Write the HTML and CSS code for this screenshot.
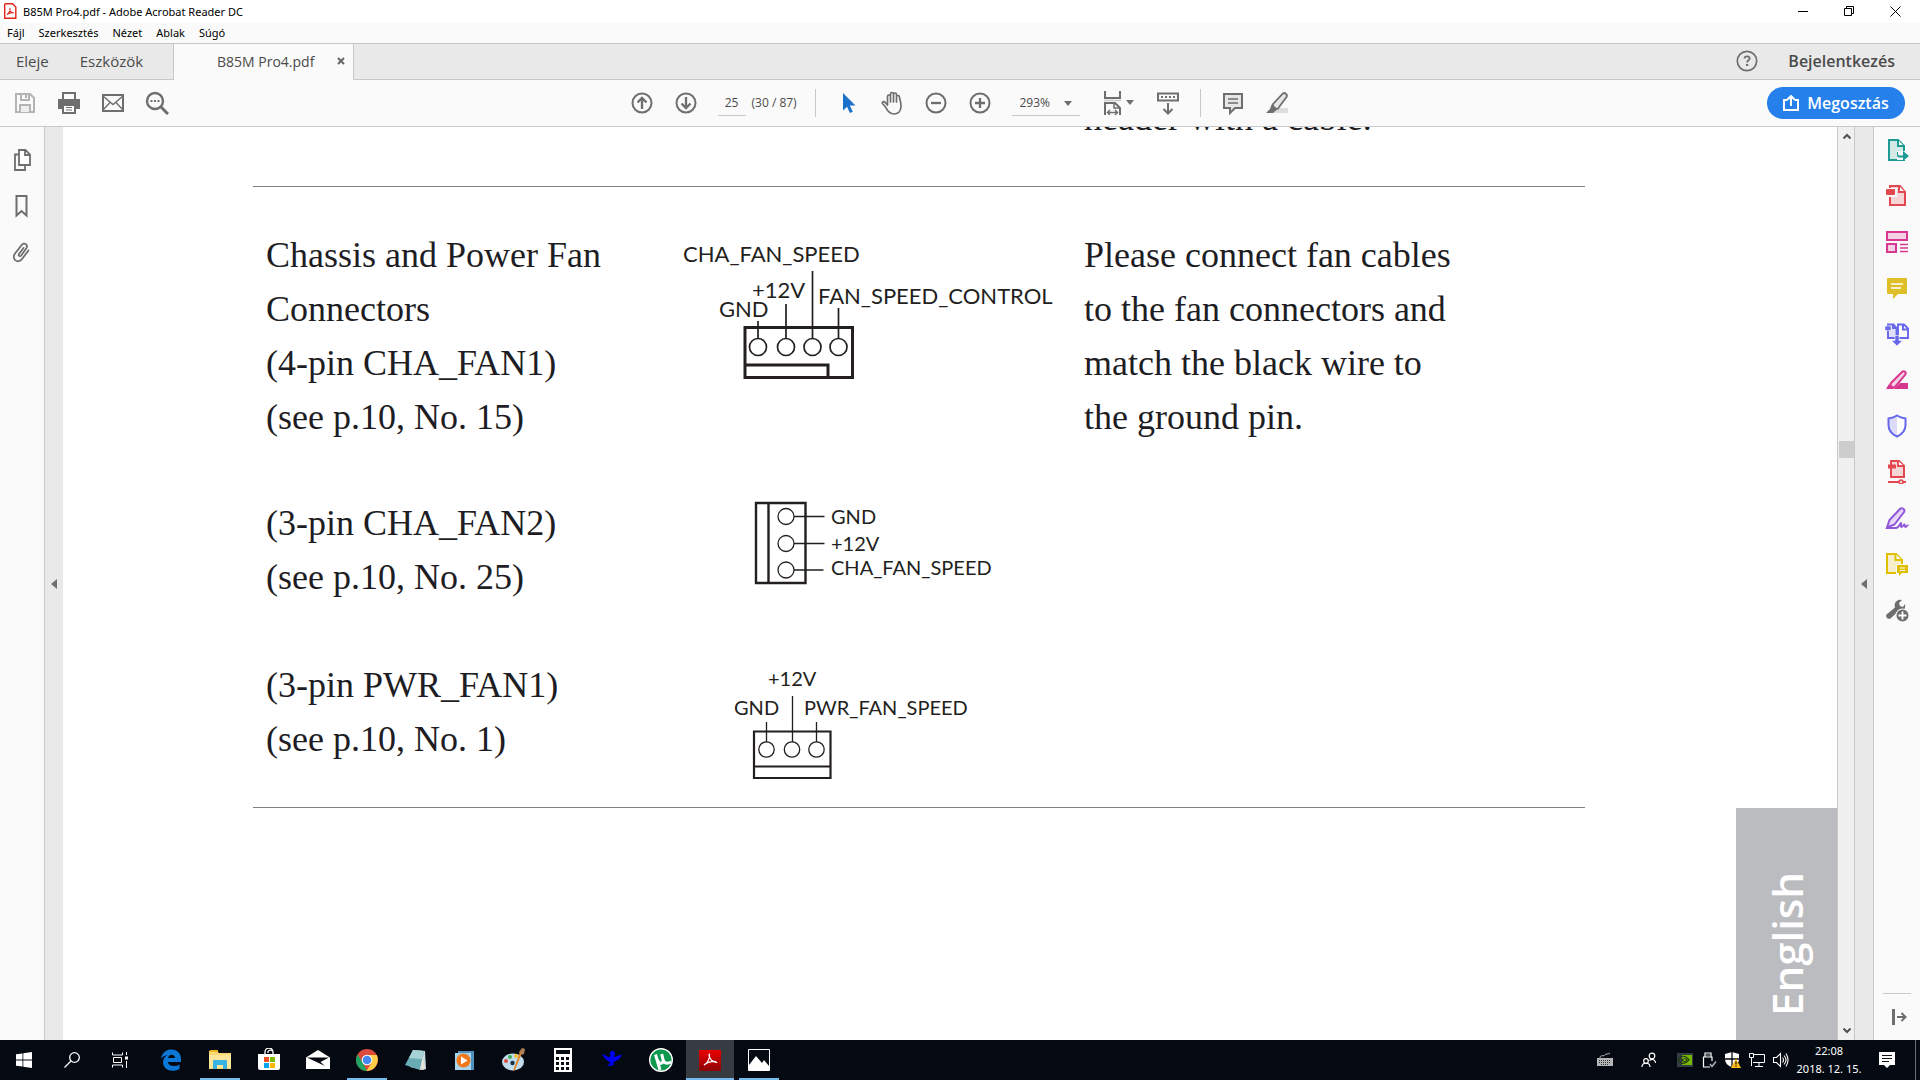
FILE: index.html
```html
<!DOCTYPE html>
<html lang="hu">
<head>
<meta charset="utf-8">
<title>B85M Pro4.pdf - Adobe Acrobat Reader DC</title>
<link rel="stylesheet" href="styles.css">
</head>
<body>
<header class="titlebar">
  <svg class="app-icon" width="13" height="16" viewBox="0 0 13 16"><path d="M1.500.7h7l3.300 3.300v11.300H.7V1.500z" fill="#fff" stroke="#e2231a" stroke-width="1.400"/><path d="M3 11.500C5 10.500 6.500 7.500 6 5c-.8 3 1.500 5 4 5-2.500-.8-5 0-7 1.500z" fill="none" stroke="#e2231a" stroke-width="1.100"/></svg>
  <h1 class="title">B85M Pro4.pdf - Adobe Acrobat Reader DC</h1>
  <div class="window-controls">
    <button class="win-btn" aria-label="Kis méret"><svg width="11" height="11"><path d="M0 5.500h10" stroke="#000"/></svg></button>
    <button class="win-btn" aria-label="Előző méret"><svg width="11" height="11" fill="none" stroke="#000"><path d="M.5 2.500h7v7h-7zM2.500 2.500v-2h7v7h-2"/></svg></button>
    <button class="win-btn" aria-label="Bezárás"><svg width="11" height="11"><path d="M.5.5l10 10M10.500.5l-10 10" stroke="#000"/></svg></button>
  </div>
</header>
<nav class="menubar">
  <button>Fájl</button><button>Szerkesztés</button><button>Nézet</button><button>Ablak</button><button>Súgó</button>
</nav>
<div class="tabstrip">
  <div class="home-tabs"><button>Eleje</button><button>Eszközök</button></div>
  <div class="doc-tab"><button class="doc-name">B85M Pro4.pdf</button><button class="doc-close" aria-label="Lap bezárása"><svg width="8" height="8"><path d="M1 1l6 6M7 1L1 7" stroke="#666" stroke-width="2"/></svg></button></div>
  <div class="account">
    <button aria-label="Súgó"><svg width="22" height="22" viewBox="0 0 22 22"><circle cx="11" cy="11" r="9.700" fill="none" stroke="#6e6e6e" stroke-width="1.700"/><path d="M8.500 8.600c0-1.500 1.200-2.300 2.600-2.300s2.500.8 2.500 2.100c0 1.800-2.500 2-2.500 4" fill="none" stroke="#6e6e6e" stroke-width="1.800"/><path d="M10 14h2.200v2H10z" fill="#6e6e6e"/></svg></button>
    <button class="signin">Bejelentkezés</button>
  </div>
</div>
<div class="toolbar">
  <div class="file-tools">
    <button aria-label="Mentés"><svg width="24" height="24" viewBox="0 0 24 24" fill="none" stroke="#b4b4b4" stroke-width="2"><path d="M3 3h14l4 4v14H3z"/><path d="M8 3v6h8V3M13 4v3"/><path d="M7 21v-7h10v7" fill="#eee"/></svg></button>
    <button aria-label="Nyomtatás"><svg width="24" height="24" viewBox="0 0 24 24"><path d="M6 8V2h12v6" fill="none" stroke="#6e6e6e" stroke-width="2"/><path d="M1 8h22v10h-4v-4H5v4H1z" fill="#6e6e6e"/><path d="M6 14h12v8H6z" fill="#fff" stroke="#6e6e6e" stroke-width="2"/><path d="M9 16.500h6M9 19h6" stroke="#6e6e6e"/></svg></button>
    <button aria-label="E-mail"><svg width="24" height="24" viewBox="0 0 24 24" fill="none" stroke="#6e6e6e"><path d="M2 4h20v16H2z" stroke-width="2"/><path d="M2 5l10 8.500L22 5M2 19l7-7.500M22 19l-7-7.500" stroke-width="1.400"/></svg></button>
    <button aria-label="Keresés"><svg width="24" height="24" viewBox="0 0 24 24"><circle cx="10" cy="10" r="8" fill="none" stroke="#6e6e6e" stroke-width="2.400"/><path d="M15.500 15.500L23 23" stroke="#6e6e6e" stroke-width="3"/><path d="M5.500 9h2v2h-2zM9 9h2v2H9zM12.500 9h2v2h-2z" fill="#6e6e6e"/></svg></button>
  </div>
  <div class="view-tools">
    <button aria-label="Előző oldal"><svg width="24" height="24" viewBox="0 0 24 24" fill="none" stroke="#6e6e6e" stroke-width="2"><circle cx="12" cy="12" r="9.500"/><path d="M12 18V7.500M7.500 11.500L12 7l4.500 4.500" stroke-width="2.300"/></svg></button>
    <button aria-label="Következő oldal"><svg width="24" height="24" viewBox="0 0 24 24" fill="none" stroke="#6e6e6e" stroke-width="2"><circle cx="12" cy="12" r="9.500"/><path d="M12 6v10.500M7.500 12.500L12 17l4.500-4.500" stroke-width="2.300"/></svg></button>
    <div class="page-nav"><input class="page-input" type="text" value="25" aria-label="Oldalszám"><span>(30 / 87)</span></div>
    <i class="sep"></i>
    <button aria-label="Kijelölés"><svg width="24" height="24" viewBox="0 0 24 24"><path d="M7 2v17.500l4-3.800 3 6.300 2.800-1.300-3-6.200h5.700z" fill="#1b71c9"/></svg></button>
    <button aria-label="Kéz"><svg width="24" height="24" viewBox="0 0 24 24" fill="none" stroke="#6e6e6e" stroke-width="1.700" stroke-linecap="round" stroke-linejoin="round"><path d="M7.500 14V5.500a1.500 1.500 0 0 1 3 0V11M10.500 11V3a1.500 1.500 0 0 1 3 0v8M13.500 11V3.500a1.500 1.500 0 0 1 3 0V11M16.500 11V6a1.500 1.500 0 0 1 3 0c0 3 2 6 1.500 10-.4 3.500-2.500 7-7 7-5.500 0-7-4-8.500-7L2.500 12.500c-.8-1.500 1.300-2.500 2.500-1.300L7.500 14"/></svg></button>
    <button aria-label="Kicsinyítés"><svg width="24" height="24" viewBox="0 0 24 24" fill="none" stroke="#6e6e6e" stroke-width="2"><circle cx="12" cy="12" r="9.500"/><path d="M7 12h10" stroke-width="2.300"/></svg></button>
    <button aria-label="Nagyítás"><svg width="24" height="24" viewBox="0 0 24 24" fill="none" stroke="#6e6e6e" stroke-width="2"><circle cx="12" cy="12" r="9.500"/><path d="M7 12h10M12 7v10" stroke-width="2.300"/></svg></button>
    <div class="zoom"><select class="zoom-select" aria-label="Nagyítás mértéke"><option>293%</option></select><svg class="zoom-caret" width="8" height="5"><path d="M0 0h8L4 5z" fill="#6e6e6e"/></svg></div>
    <button class="fit" aria-label="Oldalkijelzés"><svg width="24" height="24" viewBox="0 0 24 24" fill="none" stroke="#6e6e6e" stroke-width="2"><path d="M4 0v7h15V0"/><path d="M3 9.500h17" stroke="#ccc" stroke-width="1.500"/><path d="M4 24V12h10l5 5v7"/><path d="M13 12v5h6M6.500 21.500h10M9 19l-2.500 2.500L9 24M14 19l2.500 2.500L14 24" stroke-width="1.500"/></svg><svg width="8" height="5"><path d="M0 0h8L4 5z" fill="#6e6e6e"/></svg></button>
    <button aria-label="Görgetés"><svg width="24" height="24" viewBox="0 0 24 24" fill="none" stroke="#6e6e6e" stroke-width="2"><path d="M2 2.500h20v7H2z"/><path d="M5 6h14" stroke-dasharray="2 2"/><path d="M12 12v10M7.500 18l4.500 4.500 4.500-4.500"/></svg></button>
    <i class="sep"></i>
    <button aria-label="Megjegyzés"><svg width="24" height="24" viewBox="0 0 24 24"><path d="M3 3h18v14h-7l-5 5v-5H3z" fill="#e6e6e6" stroke="#6e6e6e" stroke-width="2"/><path d="M7 8h10M7 12h10" stroke="#6e6e6e" stroke-width="1.600"/></svg></button>
    <button aria-label="Kiemelés"><svg width="24" height="24" viewBox="0 0 24 24"><path d="M12 17h11v5H7z" fill="#ddd"/><path d="M8 13L18 2.500c1.500-1.500 5 1 3.500 3.500L13 17.500c-1.500 1.500-6-2-5-4.500z" fill="#e6e6e6" stroke="#6e6e6e" stroke-width="1.800"/><path d="M6.500 13.500l5.500 5L8 22H1l4-4z" fill="#6e6e6e"/></svg></button>
  </div>
  <button class="share"><svg width="16" height="16" viewBox="0 0 16 16" fill="none" stroke="#fff" stroke-width="2"><path d="M4.500 5H1v10h14V5h-3.500M8 11V2M4.500 4.500L8 1l3.500 3.500"/></svg>Megosztás</button>
</div>
<main class="workspace">
  <aside class="left-pane">
    <button aria-label="Oldalminiatűrök"><svg width="20" height="24" viewBox="0 0 20 24" fill="none" stroke="#6e6e6e" stroke-width="1.800"><path d="M7 6.500H3V22h10v-4"/><path d="M7 2h6.500L18 6.500V17H7z" fill="#fff"/><path d="M13 2v5h5"/></svg></button>
    <button aria-label="Könyvjelzők"><svg width="20" height="24" viewBox="0 0 20 24" fill="none" stroke="#6e6e6e" stroke-width="2"><path d="M4.500 2h10v19.500l-5-4.500-5 4.500z"/></svg></button>
    <button aria-label="Mellékletek"><svg width="20" height="24" viewBox="0 0 20 24" fill="none" stroke="#6e6e6e" stroke-width="1.800" stroke-linecap="round"><path d="M11.500 8L7 14c-1 1.500 1 3 2.200 1.500l5-7C16.500 5 12.500 1.500 9.700 5L3 13.500c-4 5.500 3 11 7 5.500l6.500-8.500"/></svg></button>
  </aside>
  <button class="gutter gutter-left" aria-label="Bal oldali ablaktábla"><svg width="7" height="12"><path d="M6 1v10L0 6z" fill="#6e6e6e"/></svg></button>
  <section class="viewport">
    <div class="page">
      <table class="manual">
        <colgroup><col class="col-name"><col class="col-diagram"><col class="col-note"></colgroup>
        <tbody>
        <tr class="previous"><td></td><td></td><td>header with a cable.</td></tr>
        <tr class="first">
          <td>Chassis and Power Fan<br>Connectors<br>(4-pin CHA_FAN1)<br>(see p.10, No. 15)</td>
          <td class="diagram"><svg class="label-large" width="400" height="160" fill="none" stroke="#231f20">
            <g><text x="13" y="34">CHA_FAN_SPEED</text><text x="82" y="70">+12V</text><text x="49" y="89">GND</text><text x="148" y="76">FAN_SPEED_CONTROL</text></g>
            <path d="M75 99.500h107.500v50H75zM75 137h83v12" stroke-width="3"/>
            <path d="M88 93v17M116 76v34M142.500 43v67M168.500 80v30" stroke-width="1.700"/>
            <g stroke-width="1.700"><circle cx="88" cy="119" r="8.500"/><circle cx="116" cy="119" r="8.500"/><circle cx="142.500" cy="119" r="8.500"/><circle cx="168.500" cy="119" r="8.500"/></g></svg></td>
          <td rowspan="3">Please connect fan cables<br>to the fan connectors and<br>match the black wire to<br>the ground pin.</td>
        </tr>
        <tr>
          <td>(3-pin CHA_FAN2)<br>(see p.10, No. 25)</td>
          <td class="diagram"><svg width="400" height="108" fill="none" stroke="#231f20">
            <g><text x="161" y="28">GND</text><text x="161" y="55">+12V</text><text x="161" y="79">CHA_FAN_SPEED</text></g>
            <path d="M86 7h49.500v80H86zM98.500 7v80" stroke-width="2.400"/>
            <path d="M124 20.500h30.500M124 47.500h30.500M124 74h29.500" stroke-width="1.300"/>
            <g stroke-width="1.300"><circle cx="116" cy="20.500" r="8"/><circle cx="116" cy="47.500" r="8"/><circle cx="116" cy="74" r="8"/></g></svg></td>
        </tr>
        <tr class="last">
          <td>(3-pin PWR_FAN1)<br>(see p.10, No. 1)</td>
          <td class="diagram"><svg width="400" height="130" fill="none" stroke="#231f20">
            <g><text x="98" y="30">+12V</text><text x="64" y="59">GND</text><text x="134" y="59">PWR_FAN_SPEED</text></g>
            <path d="M84 75.500h76.500v46.500H84zM84 110.500h76.500" stroke-width="2.200"/>
            <path d="M96.500 66v20M122.500 40v46M146.500 66v20" stroke-width="1.300"/>
            <g stroke-width="1.300"><circle cx="96.500" cy="93.500" r="7.700"/><circle cx="122" cy="93.500" r="7.700"/><circle cx="146.500" cy="93.500" r="7.700"/></g></svg></td>
        </tr>
        </tbody>
      </table>
      <div class="language"><span>English</span></div>
    </div>
  </section>
  <div class="scrollbar">
    <button aria-label="Fel"><svg width="8" height="6"><path d="M.5 5.500L4 2l3.500 3.500" fill="none" stroke="#505050" stroke-width="2"/></svg></button>
    <i class="thumb"></i>
    <button class="down" aria-label="Le"><svg width="8" height="6"><path d="M.5.5L4 4 7.500.5" fill="none" stroke="#505050" stroke-width="2"/></svg></button>
  </div>
  <button class="gutter gutter-right" aria-label="Jobb oldali ablaktábla"><svg width="7" height="12"><path d="M6 1v10L0 6z" fill="#6e6e6e"/></svg></button>
  <aside class="right-pane">
    <button aria-label="PDF exportálása"><svg width="24" height="24" viewBox="0 0 24 24"><path d="M4 2h9l6 6v14H4z" fill="#d3e9e6" stroke="#1c9a94" stroke-width="2"/><path d="M13 2v6h6" fill="#fff" stroke="#1c9a94" stroke-width="2"/><path d="M12 13h12v9H12z" fill="#fafafa"/><path d="M13 14v2.500q0 1 2 1h3V13l6 5-6 5v-3.500h-4q-2 0-2-3V14z" fill="#1c9a94"/></svg></button>
    <button aria-label="PDF létrehozása"><svg width="24" height="24" viewBox="0 0 24 24"><path d="M5 2h10l5 6v13H5z" fill="#f5d5d6" stroke="#e34850" stroke-width="2"/><path d="M14 2v6h6" fill="#fff" stroke="#e34850" stroke-width="2"/><rect x="0" y="4" width="12" height="9" rx="1" fill="#fafafa"/><rect x="1" y="5" width="9" height="6" rx="1" fill="#e34850"/></svg></button>
    <button aria-label="Rendezés"><svg width="24" height="24" viewBox="0 0 24 24"><path d="M2 2h20v8H2zM2 14h9v8H2z" fill="#f5d0e5" stroke="#d83790" stroke-width="2"/><path d="M15 14.500h8M15 18h8M15 21.500h8" stroke="#d83790" stroke-width="1.300"/></svg></button>
    <button aria-label="Megjegyzés"><svg width="24" height="24" viewBox="0 0 24 24"><path d="M3 2h18a1 1 0 0 1 1 1v14a1 1 0 0 1-1 1h-8l-5 5v-5H3a1 1 0 0 1-1-1V3a1 1 0 0 1 1-1z" fill="#dfbf27"/><path d="M6 8h12M6 12h10" stroke="#fff" stroke-width="1.700"/></svg></button>
    <button aria-label="Fájlok egyesítése"><svg width="24" height="24" viewBox="0 0 24 24" fill="none" stroke="#6767ec" stroke-width="1.900"><path d="M3 2.500h5.500l3 3.500v10H3z" fill="#e0e0fb"/><path d="M8 2.500V6h3M13 2.500h6l4 4V16H13zM18 2.500v5h5"/><path d="M0 4h6v4.500H0zM10 13.500h4v5h3.500L12 24l-5.500-5.500H10z" fill="#6767ec" stroke="#fafafa" stroke-width=".6"/></svg></button>
    <button aria-label="Kitakarás"><svg width="24" height="24" viewBox="0 0 24 24"><path d="M15 15h8v6H9z" fill="#d83790"/><path d="M6 15L17 4c2-2 5 .5 3 3L10 19c-2 2-6-2-4-4z" fill="#f5d0e5" stroke="#d83790" stroke-width="2"/><path d="M4 16l5 5H1z" fill="#d83790"/></svg></button>
    <button aria-label="Védelem"><svg width="24" height="24" viewBox="0 0 24 24"><path d="M12 1.500c3 2 5.500 2.500 8.500 3V11c0 6-4 9.500-8.500 11.500C7.500 20.500 3.500 17 3.500 11V4.500c3-.5 5.500-1 8.500-3z" fill="#fff"/><path d="M12 1.500v21C7.500 20.500 3.500 17 3.500 11V4.500c3-.5 5.500-1 8.500-3z" fill="#dcdcfa"/><path d="M12 1.500c3 2 5.500 2.500 8.500 3V11c0 6-4 9.500-8.500 11.500C7.500 20.500 3.500 17 3.500 11V4.500c3-.5 5.500-1 8.500-3z" fill="none" stroke="#6767ec" stroke-width="2"/></svg></button>
    <button aria-label="PDF optimalizálása"><svg width="24" height="24" viewBox="0 0 24 24"><path d="M6 1h8l5 5v11H6z" fill="#f5d5d6" stroke="#e34850" stroke-width="2"/><path d="M13 1v5h6" fill="#fff" stroke="#e34850" stroke-width="1.800"/><path d="M3 4.500h8v4H3z" fill="#e34850"/><path d="M3 22h18" stroke="#e34850" stroke-width="2"/><circle cx="16" cy="22" r="2" fill="#f5d5d6" stroke="#e34850" stroke-width="1.500"/></svg></button>
    <button aria-label="Kitöltés és aláírás"><svg width="24" height="24" viewBox="0 0 24 24"><path d="M2 21.500L4.500 14 15 3c2-2 5.500.5 4 3L9.500 18.500z" fill="#e5d7f5" stroke="#9256d9" stroke-width="2"/><path d="M1 22h10c3 0 4-5 5-5s-1 4 .5 4 2-2.500 3-2.500-.5 2.500 1 2.500 1-1.500 3-2" fill="none" stroke="#9256d9" stroke-width="1.800"/></svg></button>
    <button aria-label="Küldés megjegyzésre"><svg width="24" height="24" viewBox="0 0 24 24"><path d="M2 2h9l6 6v13H2z" fill="#f6eecb" stroke="#dfbf00" stroke-width="2"/><path d="M10.500 2v6H17" fill="#fff" stroke="#dfbf00" stroke-width="2"/><path d="M11 12h13v10H11z" fill="#fafafa"/><path d="M12 13h11v8h-6l-3 3v-3h-2z" fill="#dfbf00"/><path d="M15 16h5M15 18.500h5" stroke="#fff"/></svg></button>
    <button aria-label="További eszközök"><svg width="24" height="24" viewBox="0 0 24 24"><path d="M1.500 16.500L10 9.500C8.500 5 12 .5 17 2l-3 3 1 3 3 1 2-3c1 5-2 8-6.500 7l-8 7.500c-2.500 1.500-5.500-2-4-4z" fill="#6e6e6e"/><circle cx="17.500" cy="17.500" r="7" fill="#fafafa"/><circle cx="17.500" cy="17.500" r="6" fill="#6e6e6e"/><path d="M13.500 17.500h8M17.500 13.500v8" stroke="#fff" stroke-width="1.800"/></svg></button>
    <div class="pane-foot"><button aria-label="Ablaktábla bezárása"><svg width="15" height="16"><path d="M1.500 0v16" stroke="#6e6e6e" stroke-width="3"/><path d="M5 8h8M9.500 4l4 4-4 4" fill="none" stroke="#6e6e6e" stroke-width="2"/></svg></button></div>
  </aside>
</main>
<footer class="taskbar">
  <div class="system">
    <button aria-label="Start"><svg width="16" height="16" fill="#fff"><path d="M0 2.300L6.500 1.400v6.200H0zM7.300 1.300L16 0v7.600H7.300zM0 8.400h6.500v6.200L0 13.700zM7.300 8.400H16V16l-8.700-1.300z"/></svg></button>
    <button aria-label="Keresés"><svg width="16" height="16" fill="none" stroke="#fff" stroke-width="1.300"><circle cx="10.500" cy="5.500" r="4.800"/><path d="M7 9L.5 15.500"/></svg></button>
    <button aria-label="Feladatnézet"><svg width="16" height="16" fill="none" stroke="#fff"><path d="M.5.500v2.500h10V.500M.5 15.500v-2.500h10v2.500M1.500 5.500h8v5h-8zM14.500 0v3M14.500 9v7"/><path d="M13 4.500h3v3h-3z" fill="#fff" stroke="none"/></svg></button>
  </div>
  <div class="apps">
    <button aria-label="Edge"><svg width="24" height="24" viewBox="0 0 24 24"><path d="M2 11C3 4 8 1.500 12 1.500c7 0 10 5 10 9.500v3H9c.3 4 7 5.500 11.500 2.500V21C13 25 4 22 4 14c0-3 2-6 5-7-4 .5-6 2-7 4zm7-1h7c0-4-6-4.500-7 0z" fill="#0b78d7"/></svg></button>
    <button class="open" aria-label="Fájlkezelő"><svg width="24" height="24" viewBox="0 0 24 24"><path d="M1 3h8l2 2h12v16H1z" fill="#f8d775"/><path d="M2 2h8v2H2z" fill="#eeb422"/><path d="M1 7h22v13H1z" fill="#fde699"/><path d="M5 21v-8q0-1 1-1h12q1 0 1 1v8h-4v-4H9v4z" fill="#39b2e4"/></svg></button>
    <button aria-label="Store"><svg width="24" height="24" viewBox="0 0 24 24"><path d="M8 6V4a4 4 0 0 1 8 0v2M11 5V3.500a3 3 0 0 1 5 0" fill="none" stroke="#fff" stroke-width="1.300"/><path d="M1 6h22v14q0 2-2 2H3q-2 0-2-2z" fill="#fff"/><path d="M7 9h5v5H7z" fill="#f25022"/><path d="M13 9h5v5h-5z" fill="#7fba00"/><path d="M7 15h5v5H7z" fill="#00a4ef"/><path d="M13 15h5v5h-5z" fill="#ffb900"/></svg></button>
    <button aria-label="Posta"><svg width="24" height="24" viewBox="0 0 24 24"><path d="M0 9.500L12 2l12 7.500V21H0z" fill="#fff"/><path d="M1 9.500h22l-8.500 4.500 4.500 4z" fill="#050a12"/></svg></button>
    <button class="open" aria-label="Chrome"><svg width="24" height="24" viewBox="0 0 24 24"><circle cx="12" cy="12" r="11" fill="#dd4b3e"/><path d="M2.500 6.500L8 15l4 8C3 22.500-1.500 14 2.500 6.500z" fill="#1da462"/><path d="M12 7h9.800C25 14 20 23 11.500 23L17 14z" fill="#ffce44"/><circle cx="12" cy="12" r="5.300" fill="#fff"/><circle cx="12" cy="12" r="4.300" fill="#4688f1"/></svg></button>
    <button aria-label="Jegyzettömb"><svg width="24" height="24" viewBox="0 0 24 24"><path d="M9 2l12 1 1 18-3 1-13-3z" fill="#c9dde0"/><path d="M9 2l11 1-4 19-15-5z" fill="#69abb5"/><path d="M9 2l11 1-2 8-13-1z" fill="#a9d2d7"/><path d="M19 8l2 13-5 1z" fill="#e4e2d8"/></svg></button>
    <button aria-label="Médialejátszó"><svg width="24" height="24" viewBox="0 0 24 24"><path d="M5 3h16v19H5z" fill="#4d91bc"/><path d="M2 5h16v17H2z" fill="#a9d7ee"/><circle cx="10.500" cy="12.500" r="7" fill="#f0791d"/><path d="M8 8.500l6.500 4-6.500 4z" fill="#fff"/></svg></button>
    <button aria-label="Paint"><svg width="24" height="24" viewBox="0 0 24 24"><ellipse cx="11" cy="14" rx="11" ry="8.500" fill="#c1dcec"/><circle cx="10.500" cy="15" r="2.200" fill="#183348"/><circle cx="4" cy="13" r="2" fill="#db4b3e"/><circle cx="8" cy="9" r="2" fill="#41ae57"/><circle cx="14" cy="8" r="2" fill="#edbd34"/><path d="M20 5l-7 17-2 1L18 4z" fill="#e48620"/><path d="M17 4l3-4 3 1-1 5-3 1z" fill="#ad7f57"/></svg></button>
    <button aria-label="Számológép"><svg width="18" height="24"><path d="M0 0h18v24H0z" fill="#fff"/><path d="M2 2h14v4H2zM2 9h3v3H2zM7 9h3v3H7zM12 9h3v3h-3zM2 14h3v3H2zM7 14h3v3H7zM12 14h3v3h-3zM2 19h3v3H2zM7 19h3v3H7zM12 19h3v3h-3z" fill="#090d14"/></svg></button>
    <button aria-label="Madár"><svg width="24" height="24" viewBox="0 0 24 24"><path d="M2 5.500L9 9.500l1.500-2-1-2.500 2-2h2.500l1 2-1 4 8-2.500c-1.500 4-4.500 6-7.500 7l-1.500 2 2 1-3 .5-.5 1.500-1.500-1-3 1 3.500-4C7 12.500 3.500 10 2 5.500z" fill="#0000f5"/></svg></button>
    <button aria-label="µTorrent"><svg width="24" height="24" viewBox="0 0 24 24"><circle cx="12" cy="12" r="11.300" fill="#0d984d" stroke="#fff" stroke-width="1.400"/><path d="M6.500 6.500L11 22M8.500 12c1.500 5 6.500 4 5.500-.5L12.700 6M14.200 12c.8 3.500 4 4 8 2" fill="none" stroke="#fff" stroke-width="3"/></svg></button>
    <button class="open active" aria-label="Acrobat Reader"><svg width="22" height="22"><defs><linearGradient id="red" x2="0" y2="1"><stop stop-color="#ec0000"/><stop offset="1" stop-color="#8b0508"/></linearGradient></defs><path d="M0 1h22v21H0z" fill="url(#red)"/><path d="M5 16c4-2 6-7 5.500-11-1.500 0 .5 8 7 8.500-1-2-9-1-12.500 2.500z" fill="none" stroke="#fff" stroke-width="1.200"/></svg></button>
    <button class="open" aria-label="Fényképek"><svg width="22" height="22"><path d="M.5.500h21v21H.5z" fill="#060c14" stroke="#fff"/><path d="M1 16l7-9 6 7 2-3 5 6v4H1z" fill="#fff"/></svg></button>
  </div>
  <div class="tray">
    <svg class="keyboard" width="16" height="16"><path d="M0 6h16v8H0z" fill="#b4b5b7"/><path d="M2 8.500h12M2 10.500h12M4 12.500h8" stroke="#333" stroke-dasharray="1 1"/><path d="M3 6c0-4 4-1 5-3s3 0 5-2" fill="none" stroke="#bbb"/></svg>
    <svg class="people" width="16" height="16" fill="none" stroke="#fff" stroke-width="1.200"><circle cx="11" cy="4" r="2.800"/><circle cx="5" cy="9" r="2.300"/><path d="M1 15c0-5 8-5 8 0M8.500 8.500c3-2.500 6-.5 6 2.500"/></svg>
    <svg width="16" height="16"><path d="M0 1h16v14H0z" fill="#343d40"/><path d="M5 3h10v10H5z" fill="#76b900"/><path d="M1 8c3-5 8-5 11 0-4 5-8 4-11 0zm4 0c2-2 4-2 5 0-1 2-4 2-5 0z" fill="none" stroke="#203515" stroke-width="1.200"/></svg>
    <svg width="16" height="16" fill="none" stroke="#fff" stroke-width="1.200"><path d="M4 5V1h6v4M11 9V5H2.500v10H9"/><path d="M6 2.500v1M8 2.500v1"/><path d="M9 12l2 2.500 4-5" stroke="#aaa" stroke-width="1.600"/></svg>
    <svg width="16" height="16"><path d="M7 0l7 2v5c0 4-3 7-7 8-4-1-7-4-7-8V2z" fill="#fff"/><path d="M7 0v15M0 7h14" stroke="#050a12" stroke-width="1.300"/><path d="M11 6.500L16 16H6z" fill="#fdbd18"/><path d="M11 9.500v3M11 13.500v1.300" stroke="#111" stroke-width="1.200"/></svg>
    <svg width="16" height="16" fill="none" stroke="#fff"><path d="M5 2.500h10.500v8H4M10 11v3M6 14.500h8M.5 1.500h4v4h-4zM2.500 6v8"/></svg>
    <svg width="16" height="16" fill="none" stroke="#fff" stroke-width="1.100"><path d="M.5 5.500h3l4-4v13l-4-4h-3zM9.500 5.500q2 2.500 0 5M11 3.500q4 4.500 0 9M13 1.500q4 6.500 0 13"/></svg>
    <div class="clock"><time>22:08</time><time>2018. 12. 15.</time></div>
    <button class="notes" aria-label="Műveletközpont"><svg width="16" height="16"><path d="M0 0h16v13h-5l-3 3-3-3H0z" fill="#fff"/><path d="M3 3.500h10M3 6.500h10M3 9.500h7" stroke="#111"/></svg></button>
  </div>
</footer>
</body>
</html>
```
FILE: styles.css
```css
* { box-sizing: border-box; }

body {
  margin: 0;
  height: 100vh;
  display: flex;
  flex-direction: column;
  overflow: hidden;
  background: #fff;
  color: #000;
  font-family: "Open Sans", "Noto Sans", sans-serif;
  font-size: 12px;
}

button {
  display: flex;
  align-items: center;
  justify-content: center;
  padding: 0;
  border: 0;
  background: none;
  color: inherit;
  font: inherit;
  white-space: nowrap;
}

svg { display: block; flex: none; }

/* Title and menu */
.titlebar { flex: none; display: flex; align-items: center; height: 23px; padding: 0 2px 1px 4px; }
.title { margin: 0 auto 0 6px; font: 11px "Noto Sans", sans-serif; }
.window-controls { display: flex; }
.win-btn { width: 46px; height: 22px; }
.menubar { flex: none; display: flex; gap: 14px; height: 20px; padding: 0 0 2px 7px; background: #fafafa; font: 11px "Noto Sans", sans-serif; }

/* Tabs */
.tabstrip {
  flex: none;
  display: flex;
  height: 37px;
  border-top: 1px solid #c8c8c8;
  background: #e9e9e9;
  color: #4b4b4b;
  font-size: 15px;
}
.home-tabs { display: flex; gap: 31px; width: 173px; padding: 0 0 2px 16px; border-bottom: 1px solid #c8c8c8; }
.doc-tab { display: flex; width: 181px; padding: 0 8px 2px 43px; justify-content: space-between; border: solid #c8c8c8; border-width: 0 1px; background: #fafafa; font-size: 14px; }
.account { flex: 1; display: flex; justify-content: flex-end; gap: 30px; padding: 0 25px 2px 0; border-bottom: 1px solid #c8c8c8; }
.signin { font-size: 16px; font-weight: 600; }

/* Toolbar */
.toolbar {
  flex: none;
  display: grid;
  grid-template-columns: 1fr auto 1fr;
  align-items: center;
  height: 47px;
  padding: 0 15px 1px 13px;
  border-bottom: 1px solid #c8c8c8;
  background: #fafafa;
  color: #4b4b4b;
}
.file-tools { display: flex; gap: 20px; }
.view-tools { display: flex; align-items: center; gap: 20px; }
.view-tools > button { height: 24px; }
.page-nav { display: flex; align-items: center; gap: 6px; width: 77px; white-space: nowrap; }
.page-input { width: 28px; height: 26px; padding: 0; border: 0; border-bottom: 1px solid #c8c8c8; background: none; color: inherit; font: inherit; text-align: center; }
.sep { width: 1px; height: 28px; background: #c8c8c8; }
.zoom { position: relative; width: 68px; }
.zoom-select { width: 100%; height: 26px; padding: 0 8px; appearance: none; border: 0; border-bottom: 1px solid #c8c8c8; border-radius: 0; background: none; color: inherit; font: inherit; }
.zoom-caret { position: absolute; right: 8px; top: 11px; }
.fit { width: 36px; gap: 1px; }
.share { justify-self: end; gap: 8px; width: 138px; height: 32px; border-radius: 16px; background: #2680eb; color: #fff; font-size: 16px; font-weight: 600; }

/* Panes round the document */
.workspace { flex: 1; min-height: 0; display: flex; background: #e9e9e9; }
.left-pane { width: 45px; padding: 10px 12px; border-right: 1px solid #c8c8c8; background: #fafafa; }
.left-pane button { width: 20px; height: 46px; }
.gutter { flex: none; width: 18px; }
.right-pane { display: flex; flex-direction: column; align-items: center; width: 47px; border-left: 1px solid #c8c8c8; background: #fafafa; }
.right-pane > button { width: 46px; height: 46px; }
.pane-foot { display: flex; justify-content: center; width: 28px; margin-top: auto; padding: 15px 0 15px 5px; border-top: 1px solid #c8c8c8; }
.scrollbar {
  display: grid;
  grid-template-rows: 17px 296fr 17px 564fr 17px;
  width: 18px;
  padding-left: 1px;
  border: solid #c8c8c8;
  border-width: 0 1px;
  background: #f0f0f0;
}
.thumb { grid-row: 3; background: #cdcdcd; }
.down { grid-row: 5; }

/* PDF page */
.viewport { flex: 1; min-width: 0; overflow: hidden; background: #fff; }
.page {
  display: grid;
  grid-template-columns: 190px 1fr 151px 101px;
  grid-template-rows: auto 1fr;
  min-height: calc(100% + 36px);
  margin-top: -36px;
}
.manual {
  grid-column: 2;
  width: 100%;
  table-layout: fixed;
  border-collapse: separate;
  border-spacing: 0;
  border-bottom: 1px solid #808285;
  color: #1d1d23;
  font: 36px/54px "Liberation Serif", serif;
}
.col-name { width: 417px; }
.col-diagram { width: 401px; }
.manual td { padding: 0 0 52px 13px; vertical-align: top; white-space: nowrap; }
.manual .previous td { padding-bottom: 41px; border-bottom: 1px solid #808285; }
.manual .first td { padding-top: 41px; }
.manual .last td { padding-top: 2px; padding-bottom: 41px; }
.manual tr .diagram { padding-left: 0; padding-bottom: 0; }
.manual .last .diagram { padding-top: 0; }
.diagram text { fill: #231f20; stroke: none; font: 20px Lato, sans-serif; }
.diagram .label-large text { font-size: 22px; }
.language {
  grid-column: 4;
  grid-row: 2;
  display: flex;
  align-items: flex-end;
  justify-content: center;
  padding-bottom: 24px;
  background: #bbbcc0;
  color: #fff;
  font: 600 42px/56px "Open Sans", sans-serif;
}
.language span { writing-mode: vertical-rl; transform: rotate(180deg); }

/* Taskbar */
.taskbar { flex: none; display: flex; height: 40px; background: #050a12; color: #fff; }
.system { display: flex; margin-right: 3px; }
.system button { width: 48px; }
.apps { display: flex; gap: 1px; }
.apps button { position: relative; width: 48px; }
.open::after { content: ""; position: absolute; inset: auto 4px 0; height: 2px; background: #76b9ed; }
.active { background: #373c42; }
.active::after { inset: auto 0 0; }
.tray { display: flex; align-items: center; gap: 8px; margin-left: auto; margin-right: 4px; padding-right: 10px; border-right: 1px solid #6a6d72; }
.keyboard { margin-right: 20px; }
.people { margin-right: 12px; }
.clock { display: grid; width: 80px; margin: 0 -8px; text-align: center; font: 11px/18px "Noto Sans", sans-serif; white-space: nowrap; }
.notes { width: 36px; }
```
